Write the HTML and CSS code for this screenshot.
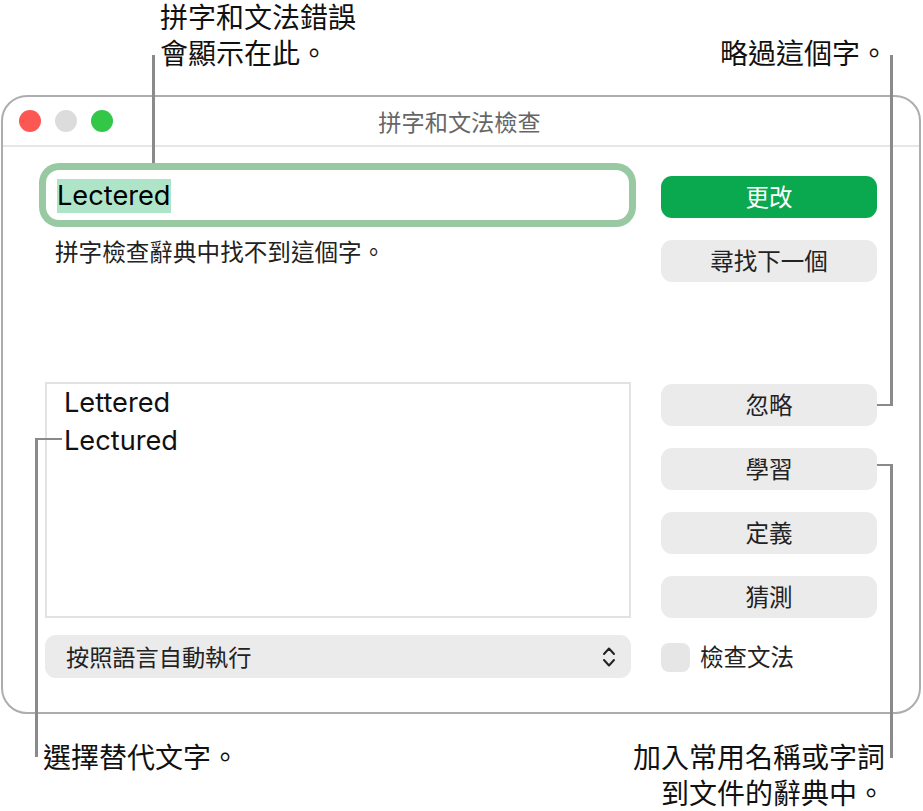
FILE: index.html
```html
<!DOCTYPE html>
<html lang="zh-Hant">
<head>
<meta charset="utf-8">
<title>拼字和文法檢查</title>
<link rel="stylesheet" href="styles.css">
</head>
<body>
<main class="stage">
  <header class="captions-top">
    <p class="caption caption-errors">拼字和文法錯誤<br>會顯示在此。</p>
    <p class="caption caption-skip">略過這個字。</p>
  </header>

  <section class="window">
    <div class="titlebar">
      <div class="lights">
        <span class="light light-close"></span>
        <span class="light light-min"></span>
        <span class="light light-max"></span>
      </div>
      <div class="title">拼字和文法檢查</div>
      <div></div>
    </div>
    <div class="panel">
      <div class="col-left">
        <div class="field"><span class="selected">Lectered</span></div>
        <p class="message">拼字檢查辭典中找不到這個字。</p>
        <ul class="guesses">
          <li>Lettered</li>
          <li>Lectured</li>
        </ul>
        <div class="select">
          <span class="select-label">按照語言自動執行</span>
          <svg class="chevrons" width="14" height="22" viewBox="0 0 14 22" fill="none" stroke="#222" stroke-width="2" stroke-linecap="round" stroke-linejoin="round"><path d="M2 8 7 2.5 12 8"/><path d="M2 14 7 19.5 12 14"/></svg>
        </div>
      </div>
      <div class="col-right">
        <button class="btn btn-primary">更改</button>
        <button class="btn">尋找下一個</button>
        <button class="btn btn-gap">忽略</button>
        <button class="btn">學習</button>
        <button class="btn">定義</button>
        <button class="btn">猜測</button>
        <label class="check"><span class="box"></span><span class="check-label">檢查文法</span></label>
      </div>
    </div>
  </section>

  <footer class="captions-bottom">
    <p class="caption caption-replace">選擇替代文字。</p>
    <p class="caption caption-add">加入常用名稱或字詞<br>到文件的辭典中。</p>
  </footer>

  <span class="leader leader-errors"></span>
  <span class="leader leader-skip"></span>
  <span class="leader leader-learn"></span>
  <span class="leader leader-replace"></span>
</main>
</body>
</html>
```

FILE: styles.css
```css
* { box-sizing: border-box; }
html, body { margin: 0; padding: 0; background: #fff; }
body {
  font-family: Inter, "Noto Sans CJK TC", sans-serif;
  color: #111;
}
.stage { position: relative; width: 923px; height: 811px; overflow: hidden; }
p { margin: 0; }

.caption { font-size: 28px; line-height: 36px; color: #111; }
.captions-top { display: flex; justify-content: space-between; height: 95px; }
.caption-errors { margin-left: 160px; }
.caption-skip { margin: 36px 35px 0 0; }
.captions-bottom { display: flex; justify-content: space-between; padding-top: 26px; }
.caption-replace { margin-left: 43px; }
.caption-add { margin-right: 38px; text-align: right; }

.window {
  margin-left: 1px;
  width: 920px;
  height: 619px;
  border: 2px solid #adadad;
  border-radius: 26px;
  background: #fff;
}
.titlebar {
  display: grid;
  grid-template-columns: 1fr auto 1fr;
  align-items: center;
  height: 50px;
  border-bottom: 2px solid #e6e6e6;
}
.lights { display: flex; gap: 14px; padding-left: 16px; }
.light { width: 22px; height: 22px; border-radius: 50%; }
.light-close { background: #fc5753; }
.light-min { background: #dcdcdc; }
.light-max { background: #33c748; }
.title { font-size: 23.2px; color: #666; margin-right: 3px; }

.panel { display: flex; gap: 30px; padding: 23px 0 0 42px; }
.col-left { width: 586px; }
.col-right { width: 216px; margin-top: 6px; display: flex; flex-direction: column; gap: 22px; }

.field {
  height: 50px;
  margin: 0 2px 0 1px;
  padding: 2px 0 0 11px;
  display: flex;
  align-items: center;
  border-radius: 13px;
  box-shadow: 0 0 0 7px #98c9a3;
  font-size: 27.2px;
  color: #000;
}
.selected { background: #aee5c9; line-height: 34px; }
.message { margin-top: 17px; padding-left: 10px; font-size: 23.6px; line-height: 32px; color: #222; }

.guesses {
  list-style: none;
  margin: 113px 0 0;
  padding: 0 0 0 17px;
  height: 236px;
  border: 2px solid #e2e2e2;
  font-size: 27.2px;
  line-height: 38px;
  color: #111;
}
.select {
  margin-top: 17px;
  height: 43px;
  padding: 0 15px 0 21px;
  display: flex;
  justify-content: space-between;
  align-items: center;
  background: #ebebeb;
  border-radius: 11px;
  font-size: 23.2px;
  color: #222;
}
.select-label { margin-top: -2px; }
.chevrons { display: block; }

.btn {
  height: 42px;
  padding: 0 0 3px;
  border: 0;
  border-radius: 11px;
  background: #ebebeb;
  font: inherit;
  font-size: 23.5px;
  color: #222;
}
.btn-primary { background: #0aa84f; color: #fff; }
.btn-gap { margin-top: 80px; }
.check { display: flex; align-items: center; gap: 10px; margin-top: 2px; font-size: 23.5px; color: #222; }
.check-label { margin-top: -3px; }
.box { width: 29px; height: 29px; border-radius: 8px; background: #e6e6e6; }

.leader { position: absolute; border: 0 solid #8a8a8a; }
.leader-errors { left: 152px; top: 55px; height: 108px; border-left-width: 3px; }
.leader-skip { left: 877px; top: 55px; width: 16px; height: 351px; border-right-width: 3px; border-bottom-width: 2px; }
.leader-learn { left: 877px; top: 464px; width: 16px; height: 294px; border-right-width: 3px; border-top-width: 2px; }
.leader-replace { left: 35px; top: 438px; width: 27px; height: 319px; border-left-width: 3px; border-top-width: 2px; }
```
